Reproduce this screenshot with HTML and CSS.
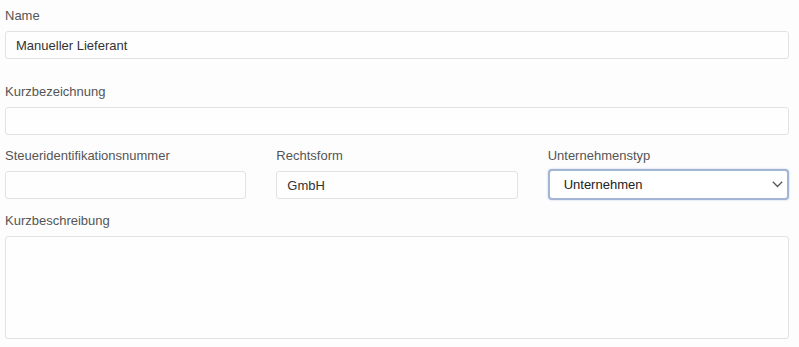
FILE: index.html
```html
<!DOCTYPE html>
<html lang="de">
<head>
    <meta charset="UTF-8">
    <meta name="viewport" content="width=device-width, initial-scale=1.0">
    <title>Lieferant bearbeiten</title>
    <link rel="stylesheet" href="styles.css">
</head>
<body>

<form class="supplier-form">
    <div class="form-group first">
        <label for="name">Name</label>
        <input type="text" id="name" value="Manueller Lieferant">
    </div>
    <div class="form-group">
        <label for="shortName">Kurzbezeichnung</label>
        <input type="text" id="shortName">
    </div>
    <div class="form-row">
        <div class="form-group">
            <label for="taxId">Steueridentifikationsnummer</label>
            <input type="text" id="taxId">
        </div>
        <div class="form-group">
            <label for="legalForm">Rechtsform</label>
            <input type="text" id="legalForm" value="GmbH">
        </div>
        <div class="form-group">
            <label for="companyType">Unternehmenstyp</label>
            <div class="select-wrap">
                <select id="companyType" class="focused">
                    <option>Unternehmen</option>
                    <option>Einzelunternehmer</option>
                    <option>Verein</option>
                </select>
                <svg class="chevron" width="11" height="7" viewBox="0 0 11 7">
                    <path d="M0.8 0.8 L5.5 5.5 L10.2 0.8" fill="none" stroke="#555" stroke-width="1.3"/>
                </svg>
            </div>
        </div>
    </div>
    <div class="form-group">
        <label for="description">Kurzbeschreibung</label>
        <textarea id="description"></textarea>
    </div>
</form>

</body>
</html>
```

FILE: styles.css
```css
body {
    margin: 0;
    background: #fdfdfe;
    font-family: "Liberation Sans", Arial, sans-serif;
    font-size: 13px;
}
.supplier-form {
    padding: 6px 10px 0 5px;
}
.form-group {
    margin-bottom: 11px;
}
.form-group.first {
    margin-bottom: 23px;
}
label {
    display: block;
    line-height: 20px;
    margin-bottom: 5px;
    color: #555;
}
input[type="text"], textarea, select {
    display: block;
    width: 100%;
    box-sizing: border-box;
    font-family: inherit;
    font-size: 13px;
    color: #333;
    background: #fefeff;
    border: 1px solid #e2e2e4;
    border-radius: 3px;
    outline: none;
}
input[type="text"] {
    height: 28px;
    padding: 0 10px;
}
.form-row {
    display: grid;
    grid-template-columns: 1fr 1fr 1fr;
    gap: 30px;
}
.select-wrap {
    position: relative;
}
select {
    height: 31px;
    margin-top: -2px;
    padding: 0 30px 0 14px;
    appearance: none;
    -webkit-appearance: none;
    color: #222;
    background: #fff;
}
select.focused {
    border: 2px solid #a2b5d5;
    box-shadow: 0 0 2px rgba(120, 150, 200, 0.5);
    border-radius: 4px;
}
.chevron {
    position: absolute;
    right: 6px;
    top: 12px;
    pointer-events: none;
}
textarea {
    height: 103px;
    resize: none;
    padding: 8px 10px;
}
```
